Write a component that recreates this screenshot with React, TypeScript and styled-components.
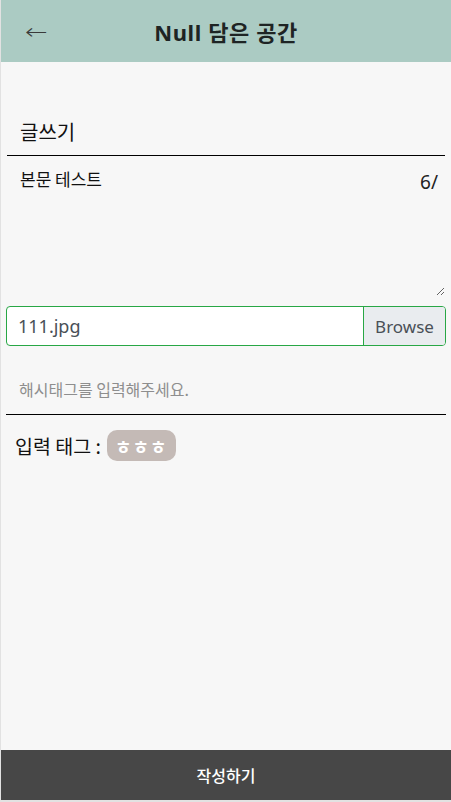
import React, { useState } from 'react';
import styled, { createGlobalStyle } from 'styled-components';

const GlobalStyle = createGlobalStyle`
  html, body {
    margin: 0;
    padding: 0;
    background-color: #e2e2e2;
  }
  * {
    box-sizing: border-box;
  }
`;

const Root = styled.div`
  margin-left: 1px;
  width: 450px;
  height: 800px;
  display: flex;
  flex-direction: column;
  background-color: #f7f7f7;
  font-family: 'Noto Sans', 'Noto Sans CJK KR', sans-serif;
  color: #111;
`;

const Header = styled.header`
  height: 62px;
  flex-shrink: 0;
  display: flex;
  align-items: center;
  justify-content: center;
  background-color: #abcbc3;
  position: relative;
`;

const BackButton = styled.span`
  position: absolute;
  left: 24px;
  top: 17px;
  font-size: 27px;
  line-height: 30px;
  color: #3a3a3a;
  font-family: 'DejaVu Sans', sans-serif;
  font-weight: 200;
  transform: scaleY(0.8);
  cursor: pointer;
`;

const Title = styled.h1`
  margin: 0;
  font-size: 22px;
  font-weight: 700;
  color: #1e2424;
  font-family: 'Noto Sans', 'Noto Sans CJK KR', sans-serif;
  letter-spacing: 0.6px;
`;

const Main = styled.main`
  flex: 1;
  display: flex;
  flex-direction: column;
  padding: 0 5px 0 5px;
`;

const TitleInput = styled.input`
  margin: 45px 1px 0 1px;
  height: 49px;
  border: none;
  border-bottom: 1px solid #000;
  background: transparent;
  padding: 0 13px;
  font-family: 'Noto Sans CJK KR', sans-serif;
  font-size: 20px;
  color: #111;
  outline: none;
`;

const BodyBox = styled.div`
  position: relative;
  margin: 0 1px;
`;

const BodyArea = styled.textarea`
  display: block;
  width: 100%;
  height: 140px;
  border: none;
  background: transparent;
  padding: 12px 13px;
  font-family: 'Noto Sans CJK KR', sans-serif;
  font-size: 17px;
  line-height: 22px;
  color: #111;
  outline: none;
`;

const Counter = styled.span`
  position: absolute;
  right: 7px;
  top: 13px;
  font-size: 19px;
  color: #222;
  font-family: 'Noto Sans', sans-serif;
`;

const FileBox = styled.div`
  margin-top: 10px;
  height: 40px;
  display: flex;
  border: 1px solid #28a745;
  border-radius: 4px;
  overflow: hidden;
  background: #fff;
`;

const FileName = styled.div`
  flex: 1;
  display: flex;
  align-items: center;
  padding: 0 11px;
  font-size: 18px;
  color: #495057;
`;

const BrowseButton = styled.div`
  width: 82px;
  display: flex;
  align-items: center;
  justify-content: center;
  background-color: #e9ecef;
  border-left: 1px solid #28a745;
  font-size: 17px;
  color: #495057;
`;

const TagInput = styled.input`
  margin-top: 20px;
  height: 49px;
  border: none;
  border-bottom: 1px solid #000;
  background: transparent;
  padding: 0 13px 2px 13px;
  font-family: 'Noto Sans CJK KR', sans-serif;
  font-size: 16px;
  color: #111;
  outline: none;
  &::placeholder {
    color: #8e8e8e;
  }
`;

const TagRow = styled.div`
  margin-top: 15px;
  display: flex;
  align-items: center;
  gap: 6px;
  padding-left: 9px;
`;

const TagLabel = styled.span`
  font-family: 'Noto Sans CJK KR', sans-serif;
  font-size: 19.5px;
  color: #111;
`;

const Tag = styled.span`
  display: inline-flex;
  align-items: center;
  justify-content: center;
  height: 31px;
  padding: 0 8px;
  border-radius: 10px;
  background-color: #c4bab6;
  color: #fff;
  font-family: 'Noto Sans CJK KR', sans-serif;
  font-weight: 700;
  font-size: 18px;
  letter-spacing: 1px;
`;

const SubmitButton = styled.button`
  height: 50px;
  flex-shrink: 0;
  border: none;
  background-color: #474747;
  color: #fff;
  font-family: 'Noto Sans CJK KR', sans-serif;
  font-size: 16px;
  font-weight: 500;
  cursor: pointer;
`;

const App = () => {
  const [title, setTitle] = useState('글쓰기');
  const [body, setBody] = useState('본문 테스트');
  const [tag, setTag] = useState('');
  const tags = ['ㅎㅎㅎ'];

  return (
    <>
      <GlobalStyle />
      <Root>
        <Header>
          <BackButton>←</BackButton>
          <Title>Null 담은 공간</Title>
        </Header>
        <Main>
          <TitleInput value={title} onChange={(e) => setTitle(e.target.value)} />
          <BodyBox>
            <BodyArea value={body} onChange={(e) => setBody(e.target.value)} />
            <Counter>{body.length}/</Counter>
          </BodyBox>
          <FileBox>
            <FileName>111.jpg</FileName>
            <BrowseButton>Browse</BrowseButton>
          </FileBox>
          <TagInput
            placeholder="해시태그를 입력해주세요."
            value={tag}
            onChange={(e) => setTag(e.target.value)}
          />
          <TagRow>
            <TagLabel>입력 태그 :</TagLabel>
            {tags.map((t) => (
              <Tag key={t}>{t}</Tag>
            ))}
          </TagRow>
        </Main>
        <SubmitButton>작성하기</SubmitButton>
      </Root>
    </>
  );
};

export default App;
